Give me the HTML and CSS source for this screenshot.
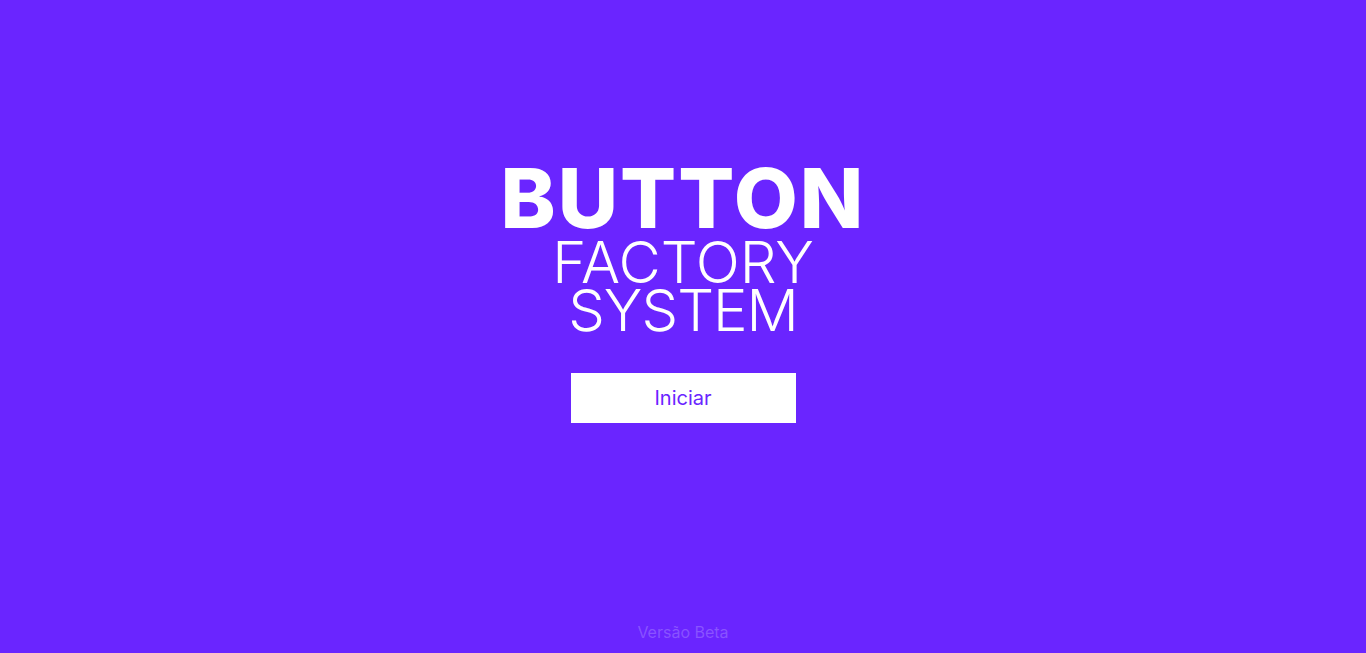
FILE: index.html
```html
<!DOCTYPE html>
<html lang="pt">
<head>
<meta charset="utf-8">
<title>Button Factory System</title>
<link rel="stylesheet" href="styles.css">
</head>
<body>
<main class="page">
  <section class="hero">
    <h1 class="title">
      <span class="title-main">BUTTON</span>
      <span class="title-sub">FACTORY</span>
      <span class="title-sub">SYSTEM</span>
    </h1>
    <button class="start-btn" type="button">Iniciar</button>
  </section>
  <footer class="version">Versão Beta</footer>
</main>
</body>
</html>
```

FILE: styles.css
```css
* { box-sizing: border-box; }
html, body {
  margin: 0;
  padding: 0;
  height: 100%;
}
body {
  background: #6a25ff;
  font-family: "Inter", "Open Sans", sans-serif;
  color: #fff;
}
.page {
  height: 653px;
  display: flex;
  flex-direction: column;
  align-items: center;
}
.hero {
  flex: 1;
  display: flex;
  flex-direction: column;
  align-items: center;
  padding-top: 158px;
}
.title {
  margin: 0;
  display: flex;
  flex-direction: column;
  align-items: center;
  font-weight: 400;
}
.title-main {
  font-size: 83px;
  font-weight: 800;
  line-height: 80px;
  letter-spacing: 2px;
}
.title-sub {
  font-size: 58px;
  font-weight: 300;
  line-height: 48px;
}
.title-sub + .title-sub {
  letter-spacing: -1px;
}
.start-btn {
  margin-top: 39px;
  width: 225px;
  height: 50px;
  border: none;
  background: #fff;
  color: #6a25ff;
  font-family: inherit;
  font-size: 20px;
  cursor: pointer;
}
.version {
  padding-bottom: 11px;
  font-size: 16px;
  color: rgba(255,255,255,0.22);
}
```
